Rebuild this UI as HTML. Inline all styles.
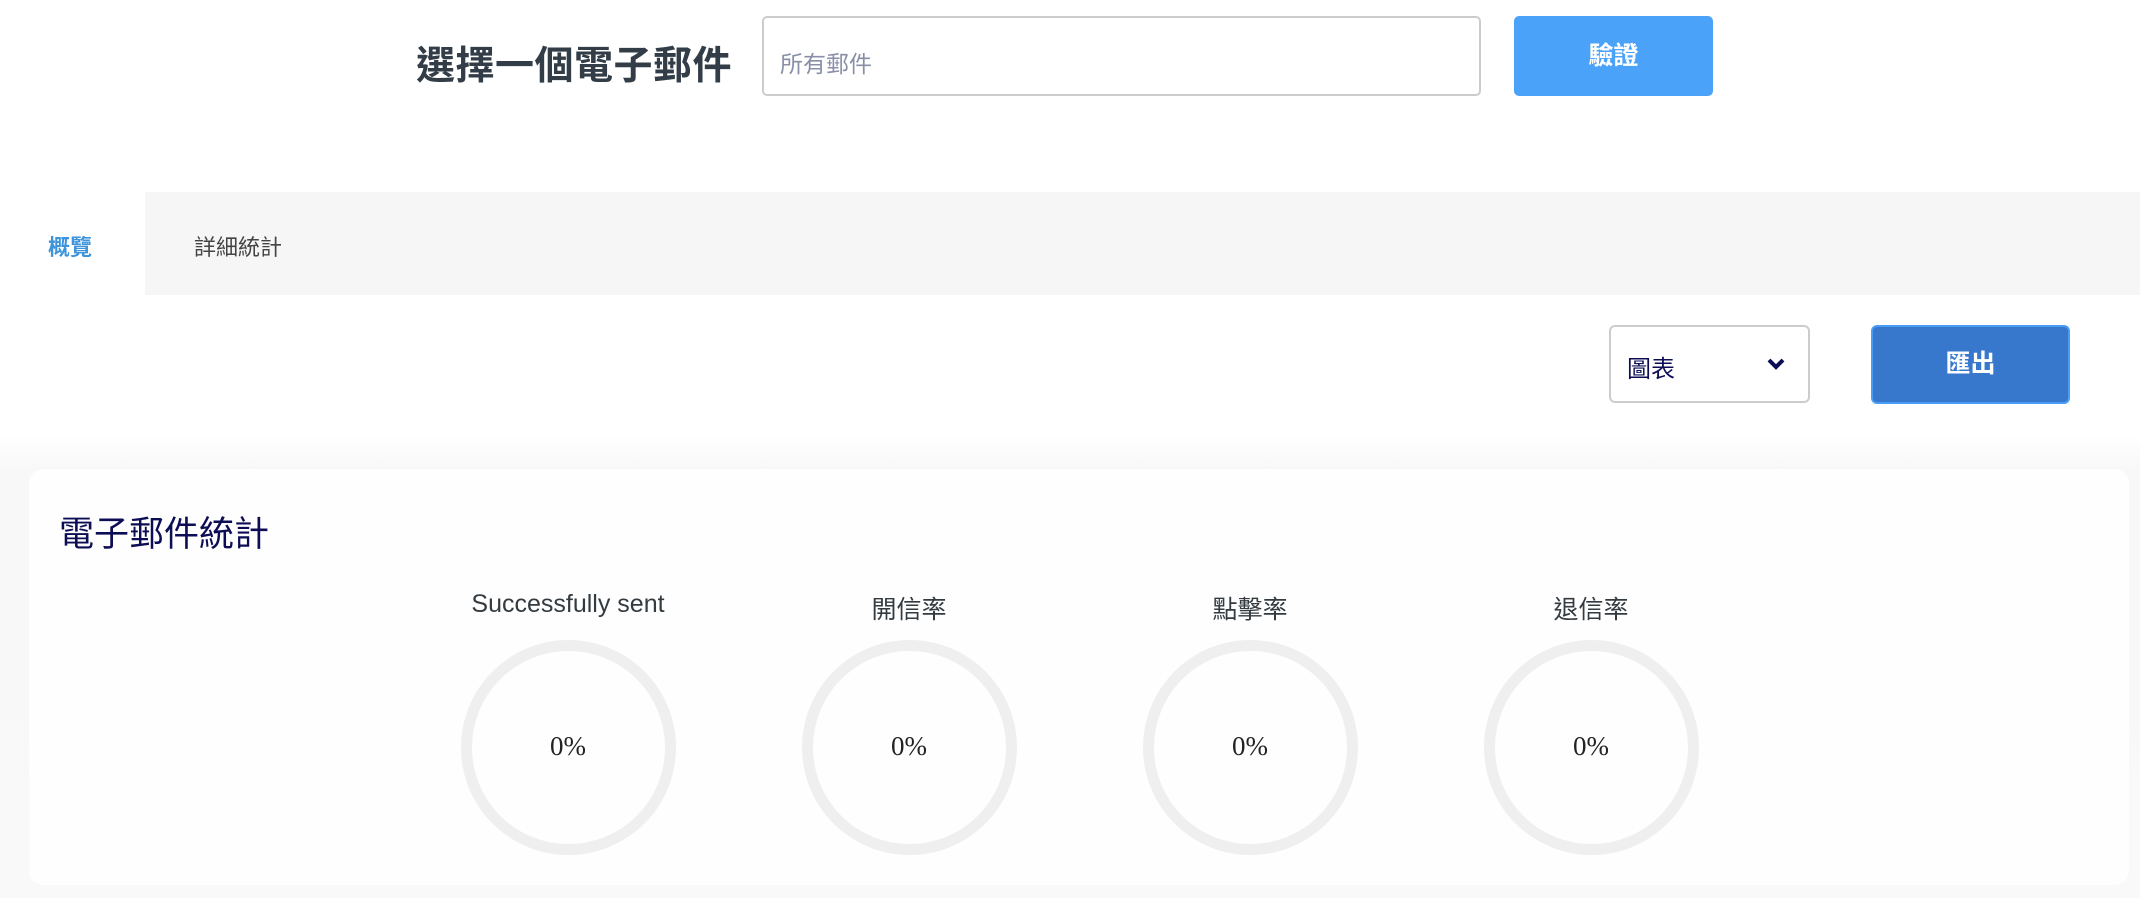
<!DOCTYPE html>
<html><head><meta charset="utf-8"><style>
*{margin:0;padding:0;box-sizing:border-box}
body{width:2140px;height:898px;background:#fff;font-family:"Liberation Sans","Noto Sans CJK TC",sans-serif;position:relative;overflow:hidden}
.a{position:absolute}
.title{left:416px;top:35px;font-size:39px;font-weight:bold;color:#333d47;white-space:nowrap;letter-spacing:0.5px}
.input{left:762px;top:16px;width:719px;height:80px;border:2px solid #ccc;border-radius:5px;font-size:23px;color:#8a8fa8;padding:27px 16px}
.btn1{left:1514px;top:16px;width:199px;height:80px;background:#4ba3f9;border-radius:5px;color:#fff;font-weight:bold;font-size:25px;text-align:center;line-height:80px}
.tabbar{left:145px;top:192px;width:1995px;height:103px;background:#f6f6f6}
.tab1{left:48px;top:230px;font-size:22px;color:#3d94db;font-weight:bold}
.tab2{left:194px;top:230px;font-size:22px;color:#444}
.bg{left:0;top:295px;width:2140px;height:603px;background:linear-gradient(#fff 0,#fff 140px,#f8f8f8 175px,#f9f9f9 100%);border-radius:20px 0 0 0}
.sel{left:1609px;top:325px;width:201px;height:78px;border:2px solid #ccc;border-radius:6px;background:#fff;font-size:24px;color:#0c0c55;padding:22px 16px}
.btn2{left:1871px;top:325px;width:199px;height:79px;background:#3778cd;border:2px solid #4a9df5;border-radius:6px;color:#fff;font-weight:bold;font-size:25px;text-align:center;line-height:75px}
.card{left:29px;top:469px;width:2100px;height:416px;background:#fefefe;border-radius:14px}
.ctitle{left:59px;top:506px;font-size:35px;color:#0d0d55}
.lbl{top:590px;width:300px;margin-left:-150px;text-align:center;font-size:25px;color:#333a40}
.pct{top:731px;width:200px;margin-left:-100px;text-align:center;font-family:"Liberation Serif",serif;font-size:27px;color:#222}
.ring{top:640px;width:215px;height:215px;margin-left:-107px;border:11px solid #efefef;border-radius:50%}
</style></head><body>
<div class="a title">選擇一個電子郵件</div>
<div class="a input">所有郵件</div>
<div class="a btn1">驗證</div>
<div class="a tabbar"></div>
<div class="a tab1">概覽</div>
<div class="a tab2">詳細統計</div>
<div class="a bg"></div>
<div class="a sel">圖表<svg class="a" style="left:156px;top:31px" width="18" height="12" viewBox="0 0 18 12"><path d="M2 2 L9 9 L16 2" stroke="#0c0c55" stroke-width="4" fill="none"/></svg></div>
<div class="a btn2">匯出</div>
<div class="a card"></div>
<div class="a ctitle">電子郵件統計</div>
<div class="a lbl" style="left:568px">Successfully sent</div>
<div class="a lbl" style="left:909px">開信率</div>
<div class="a lbl" style="left:1250px">點擊率</div>
<div class="a lbl" style="left:1591px">退信率</div>
<div class="a ring" style="left:568px"></div>
<div class="a ring" style="left:909px"></div>
<div class="a ring" style="left:1250px"></div>
<div class="a ring" style="left:1591px"></div>
<div class="a pct" style="left:568px">0%</div>
<div class="a pct" style="left:909px">0%</div>
<div class="a pct" style="left:1250px">0%</div>
<div class="a pct" style="left:1591px">0%</div>
</body></html>
